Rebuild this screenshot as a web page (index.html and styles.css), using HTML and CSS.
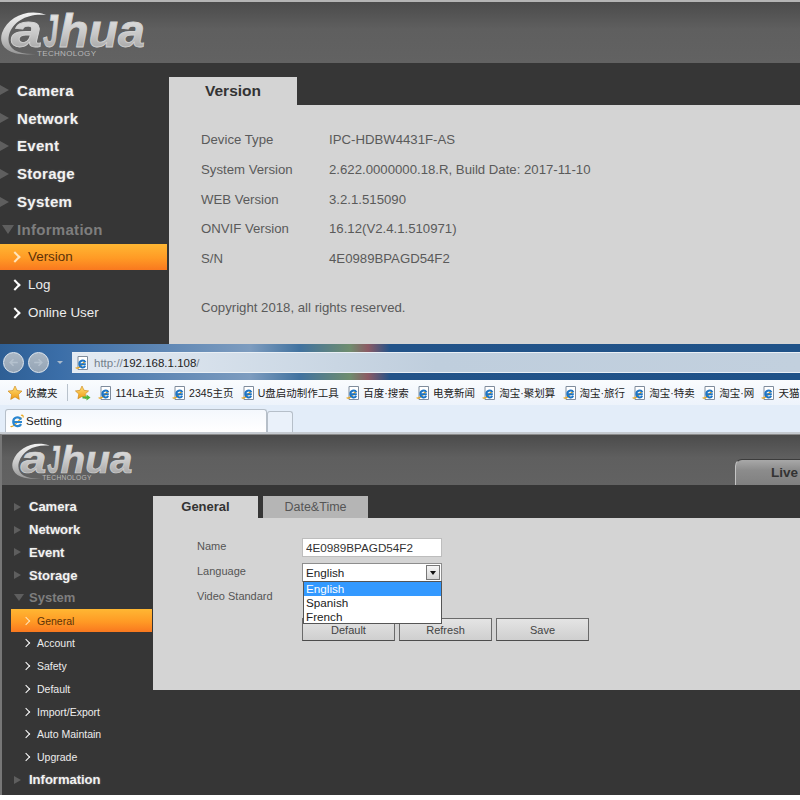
FILE: index.html
```html
<!DOCTYPE html>
<html lang="en">

<head>
    <meta charset="UTF-8">
    <meta name="viewport" content="width=device-width, initial-scale=1.0">
    <title>Setting</title>
    <link rel="stylesheet" href="styles.css">
</head>

<body>
    <!-- shared icons -->
    <svg class="defs" width="0" height="0">
        <defs>
            <linearGradient id="logoFill" x1="0" y1="0" x2="0" y2="1">
                <stop offset="0" stop-color="#f2f2f2" />
                <stop offset="0.55" stop-color="#c8c8c8" />
                <stop offset="1" stop-color="#969696" />
            </linearGradient>
            <linearGradient id="starFill" x1="0" y1="0" x2="0" y2="1">
                <stop offset="0" stop-color="#ffe27a" />
                <stop offset="1" stop-color="#f09a12" />
            </linearGradient>
            <symbol id="iePage" viewBox="0 0 14 14">
                <path d="M3 .5h9.500v13H3z" fill="#fff" stroke="#7f8c9c" />
                <path d="M.8 11.500C2 13.500 6 10.500 10 5" fill="none" stroke="#e8a61c" stroke-width="1.400" />
                <path d="M10.800 8.300H4.300a3.300 3.300 0 0 1 6.200-1.900M4.300 8.300a3.300 3.300 0 0 0 6 1.700" fill="none" stroke="#1c74c4" stroke-width="1.900" />
            </symbol>
        </defs>
    </svg>

    <section class="app app-large">
        <header class="app-header">
            <svg class="logo" viewBox="0 0 150 61" role="img" aria-label="dahua technology">
                <path class="logo-swoosh" d="M46 13C28 6 8 15 2 31-2 44 8 55 36 52 16 53 6 46 9 33 13 19 28 11 46 13Z" />
                <text class="logo-word" x="11" y="45" textLength="31" lengthAdjust="spacingAndGlyphs">a</text>
                <text class="logo-word" x="43" y="45" textLength="15" lengthAdjust="spacingAndGlyphs">J</text>
                <text class="logo-word" x="59" y="45" textLength="86" lengthAdjust="spacingAndGlyphs">hua</text>
                <text class="logo-sub" x="37" y="54" textLength="59">TECHNOLOGY</text>
            </svg>
        </header>
        <div class="app-body">
            <nav class="sidebar">
                <div class="menu-group">Camera</div>
                <div class="menu-group">Network</div>
                <div class="menu-group">Event</div>
                <div class="menu-group">Storage</div>
                <div class="menu-group">System</div>
                <div class="menu-group open">Information</div>
                <div class="menu-item active">Version</div>
                <div class="menu-item">Log</div>
                <div class="menu-item">Online User</div>
            </nav>
            <main class="content">
                <div class="tabs">
                    <div class="tab current">Version</div>
                </div>
                <div class="panel">
                    <dl class="info">
                        <dt>Device Type</dt>
                        <dd>IPC-HDBW4431F-AS</dd>
                        <dt>System Version</dt>
                        <dd>2.622.0000000.18.R, Build Date: 2017-11-10</dd>
                        <dt>WEB Version</dt>
                        <dd>3.2.1.515090</dd>
                        <dt>ONVIF Version</dt>
                        <dd>16.12(V2.4.1.510971)</dd>
                        <dt>S/N</dt>
                        <dd>4E0989BPAGD54F2</dd>
                    </dl>
                    <p class="copyright">Copyright 2018, all rights reserved.</p>
                </div>
            </main>
        </div>
    </section>

    <div class="browser">
        <div class="glass">
            <div class="nav-buttons">
                <span class="round-btn"><svg viewBox="0 0 12 12"><path d="M10 6H3M6 3 3 6l3 3" fill="none" stroke="#b4c1ce" stroke-width="1.500" /></svg></span>
                <span class="round-btn"><svg viewBox="0 0 12 12"><path d="M2 6h7M6 3l3 3-3 3" fill="none" stroke="#b4c1ce" stroke-width="1.500" /></svg></span>
                <span class="nav-drop"></span>
            </div>
            <div class="address">
                <svg class="ie-icon"><use href="#iePage" /></svg>
                <span class="url"><span class="url-dim">http://</span>192.168.1.108<span class="url-dim">/</span></span>
            </div>
        </div>
        <div class="favorites">
            <span class="fav-main">
                <svg class="star" viewBox="0 0 16 16"><path d="M8 1l2.100 4.500 4.900.6-3.600 3.400.9 4.900L8 11.900 3.700 14.400l.9-4.900L1 6.100l4.900-.6z" fill="url(#starFill)" stroke="#c9810f" stroke-width=".6" /></svg>
                收藏夹
            </span>
            <span class="fav-sep"></span>
            <svg class="star-add" viewBox="0 0 16 16">
                <path d="M7 1l2 4.300 4.600.6-3.400 3.200.9 4.600L7 11.400 2.900 13.700l.9-4.600L.4 5.900 5 5.300z" fill="url(#starFill)" stroke="#c9810f" stroke-width=".6" />
                <path d="M7.500 11.500h4V9.500l4 3-4 3v-2h-4z" fill="#4fb53a" />
            </svg>
            <a class="fav"><svg class="ie-icon"><use href="#iePage" /></svg>114La主页</a>
            <a class="fav"><svg class="ie-icon"><use href="#iePage" /></svg>2345主页</a>
            <a class="fav"><svg class="ie-icon"><use href="#iePage" /></svg>U盘启动制作工具</a>
            <a class="fav"><svg class="ie-icon"><use href="#iePage" /></svg>百度·搜索</a>
            <a class="fav"><svg class="ie-icon"><use href="#iePage" /></svg>电竞新闻</a>
            <a class="fav"><svg class="ie-icon"><use href="#iePage" /></svg>淘宝·聚划算</a>
            <a class="fav"><svg class="ie-icon"><use href="#iePage" /></svg>淘宝·旅行</a>
            <a class="fav"><svg class="ie-icon"><use href="#iePage" /></svg>淘宝·特卖</a>
            <a class="fav"><svg class="ie-icon"><use href="#iePage" /></svg>淘宝·网</a>
            <a class="fav"><svg class="ie-icon"><use href="#iePage" /></svg>天猫</a>
        </div>
        <div class="browser-tabs">
            <div class="browser-tab">
                <svg class="ie-big" viewBox="0 0 14 14">
                    <path d="M.8 12C1.500 14 6 10.500 11.500 3.500M11 1.500c1.500-.8 2.500 0 2 2" fill="none" stroke="#e8a61c" stroke-width="1.200" />
                    <path d="M12 8H3.300a4.300 4.300 0 0 1 8-2.500M3.300 8a4.300 4.300 0 0 0 7.900 2.200" fill="none" stroke="#2a86d0" stroke-width="2.200" />
                </svg>
                Setting
            </div>
            <div class="browser-tab-new"></div>
        </div>
    </div>

    <section class="app app-small">
        <header class="app-header">
            <svg class="logo" viewBox="0 0 150 61" role="img" aria-label="dahua technology">
                <path class="logo-swoosh" d="M46 13C28 6 8 15 2 31-2 44 8 55 36 52 16 53 6 46 9 33 13 19 28 11 46 13Z" />
                <text class="logo-word" x="11" y="45" textLength="31" lengthAdjust="spacingAndGlyphs">a</text>
                <text class="logo-word" x="43" y="45" textLength="15" lengthAdjust="spacingAndGlyphs">J</text>
                <text class="logo-word" x="59" y="45" textLength="86" lengthAdjust="spacingAndGlyphs">hua</text>
                <text class="logo-sub" x="37" y="54" textLength="59">TECHNOLOGY</text>
            </svg>
            <div class="live-tab">Live</div>
        </header>
        <div class="app-body">
            <nav class="sidebar">
                <div class="menu-group">Camera</div>
                <div class="menu-group">Network</div>
                <div class="menu-group">Event</div>
                <div class="menu-group">Storage</div>
                <div class="menu-group open">System</div>
                <div class="menu-item active">General</div>
                <div class="menu-item">Account</div>
                <div class="menu-item">Safety</div>
                <div class="menu-item">Default</div>
                <div class="menu-item">Import/Export</div>
                <div class="menu-item">Auto Maintain</div>
                <div class="menu-item">Upgrade</div>
                <div class="menu-group">Information</div>
            </nav>
            <main class="content">
                <div class="tabs">
                    <div class="tab current">General</div>
                    <div class="tab">Date&amp;Time</div>
                </div>
                <div class="panel">
                    <div class="form">
                        <label class="form-label">Name</label>
                        <input class="field" type="text" value="4E0989BPAGD54F2">
                        <label class="form-label">Language</label>
                        <div class="select-wrap">
                            <div class="select">
                                <span>English</span>
                                <span class="select-arrow"></span>
                            </div>
                            <ul class="dropdown">
                                <li class="selected">English</li>
                                <li>Spanish</li>
                                <li>French</li>
                            </ul>
                        </div>
                        <label class="form-label">Video Standard</label>
                        <div class="video-row"></div>
                    </div>
                    <div class="form-buttons">
                        <button class="btn">Default</button>
                        <button class="btn">Refresh</button>
                        <button class="btn">Save</button>
                    </div>
                </div>
            </main>
        </div>
    </section>
</body>

</html>
```

FILE: styles.css
```css
html,
body {
    margin: 0;
    padding: 0;
    height: 800px;
    overflow: hidden;
    background-color: #fff;
    font-family: "Liberation Sans", Arial, sans-serif;
}

.defs {
    display: block;
    height: 0;
}

/* device web page */
.app {
    display: flex;
    flex-direction: column;
    overflow: hidden;
    background-color: #363636;
}

.app-large {
    height: 344px;
    border-top: 2px solid #b4b4b4;
    box-sizing: border-box;
}

.app-small {
    height: 361px;
    border-top: 1px solid #8a8a8a;
    border-left: 2px solid #777;
    box-sizing: border-box;
}

.app-header {
    display: flex;
    justify-content: space-between;
    align-items: flex-start;
    flex-shrink: 0;
    background: linear-gradient(#4b4b4b, #5f5f5f 45%, #626262);
}

.app-large .app-header {
    height: 61px;
}

.app-small .app-header {
    height: 50px;
}

.logo {
    display: block;
    flex-shrink: 0;
}

.app-large .logo {
    width: 150px;
    height: 61px;
}

.app-small .logo {
    width: 126px;
    height: 51px;
    margin-left: 9px;
}

.logo-swoosh {
    fill: url(#logoFill);
}

.logo-word {
    font-size: 46px;
    font-weight: bold;
    font-style: italic;
    fill: url(#logoFill);
    stroke: #d2d2d2;
    stroke-width: 0.8px;
}

.logo-sub {
    font-size: 8px;
    fill: #b8b8b8;
}

.live-tab {
    flex-shrink: 0;
    align-self: flex-end;
    box-sizing: border-box;
    width: 65px;
    height: 26px;
    padding-left: 35px;
    line-height: 25px;
    font-size: 13.500px;
    font-weight: bold;
    color: #333;
    background: linear-gradient(#a8a8a8, #8c8c8c 40%, #808080);
    border-radius: 7px 0 0 0;
    border-top: 1px solid #3c3c3c;
    border-left: 1px solid #c4c4c4;
}

.app-body {
    display: flex;
    flex: 1;
    min-height: 0;
}

/* left menu */
.sidebar {
    flex-shrink: 0;
    display: flex;
    flex-direction: column;
}

.app-large .sidebar {
    width: 169px;
    padding-top: 13.500px;
}

.app-small .sidebar {
    width: 151px;
    padding-top: 10.600px;
}

.menu-group {
    display: flex;
    align-items: center;
    font-weight: bold;
    color: #f2f2f2;
    text-shadow: 0 0 2px rgba(255, 255, 255, 0.35);
}

.menu-group::before {
    content: "";
    flex-shrink: 0;
    width: 0;
    height: 0;
    border-style: solid;
    border-width: 5px 0 5px 9px;
    border-color: transparent transparent transparent #5e5e5e;
}

.menu-group.open {
    color: #7e7e7e;
    text-shadow: none;
}

.menu-group.open::before {
    border-width: 9px 6px 0 6px;
    border-color: #5e5e5e transparent transparent transparent;
}

.menu-item {
    display: flex;
    align-items: center;
    color: #ededed;
}

.menu-item::before {
    content: "";
    flex-shrink: 0;
    width: 6px;
    height: 6px;
    border-top: 2px solid #fff;
    border-right: 2px solid #fff;
    transform: rotate(45deg);
}

.menu-item.active {
    color: #5c3208;
    background: linear-gradient(#ffb733, #ff9a25 55%, #f9781f);
}

.menu-item.active::before {
    border-color: #ffe4bb;
}

.app-large .menu-group {
    height: 27.800px;
    font-size: 15px;
    letter-spacing: 0.3px;
}

.app-large .menu-group::before {
    margin-right: 8px;
}

.app-large .menu-group.open::before {
    margin: 0 3px 0 2px;
}

.app-large .menu-item {
    height: 27.800px;
    width: 167px;
    font-size: 13.400px;
}

.app-large .menu-item.active {
    height: 26px;
    margin: 0.300px 0 1.500px;
}

.app-large .menu-item::before {
    margin: 0 9px 0 11px;
}

.app-small .menu-group {
    height: 22.750px;
    font-size: 13px;
    padding-left: 12px;
}

.app-small .menu-group::before {
    border-width: 4px 0 4px 7px;
    margin-right: 8px;
}

.app-small .menu-group.open::before {
    border-width: 7px 5px 0 5px;
    margin-right: 5px;
}

.app-small .menu-item {
    height: 22.750px;
    font-size: 10.500px;
    margin-left: 9px;
    width: 141px;
}

.app-small .menu-item::before {
    width: 5px;
    height: 5px;
    margin: 0 8px 0 12px;
    border-width: 1.500px;
}

/* right side */
.content {
    flex: 1;
    display: flex;
    flex-direction: column;
}

.app-large .content {
    padding-top: 14px;
}

.app-small .content {
    padding-top: 11px;
    padding-bottom: 105px;
}

.tabs {
    display: flex;
    gap: 5px;
}

.tab {
    text-align: center;
    background-color: #b5b5b5;
    color: #555;
}

.tab.current {
    background-color: #d4d4d4;
    color: #333;
    font-weight: bold;
}

.app-large .tab {
    width: 128px;
    height: 28px;
    line-height: 27px;
    font-size: 15.500px;
}

.app-small .tab {
    width: 105px;
    height: 22px;
    line-height: 22px;
    font-size: 12.500px;
}

.app-small .tab.current {
    font-size: 13px;
}

.panel {
    flex: 1;
    background-color: #d4d4d4;
}

.app-large .panel {
    padding: 20px 32px 0;
}

.info {
    display: grid;
    grid-template-columns: 128px 1fr;
    grid-auto-rows: 29.700px;
    align-items: center;
    margin: 0;
    font-size: 13.200px;
    color: #5a5a5a;
}

.info dd {
    margin: 0;
}

.copyright {
    margin: 27px 0 0;
    font-size: 13.200px;
    color: #5a5a5a;
}

.form {
    display: grid;
    grid-template-columns: 105px 140px;
    grid-template-rows: 19px 19px 19px;
    row-gap: 6px;
    align-items: center;
    padding: 20px 0 0 44px;
}

.form-label {
    padding-bottom: 3px;
    font-size: 11px;
    color: #555;
}

.field {
    box-sizing: border-box;
    width: 140px;
    height: 19px;
    padding: 0 3px;
    margin: 0;
    border: 1px solid #bdbdbd;
    background-color: #fff;
    font-family: inherit;
    font-size: 11.700px;
    color: #333;
}

.select-wrap {
    position: relative;
}

.select {
    box-sizing: border-box;
    display: flex;
    justify-content: space-between;
    align-items: center;
    height: 19px;
    padding: 0 1px 0 3px;
    border: 1px solid #8d8d8d;
    background-color: #fff;
    font-size: 11.700px;
    color: #222;
}

.select-arrow {
    box-sizing: border-box;
    width: 14px;
    height: 15px;
    border: 1px solid #777;
    background: linear-gradient(#f6f6f6, #d6d6d6);
    position: relative;
}

.select-arrow::after {
    content: "";
    position: absolute;
    left: 3px;
    top: 5px;
    border-style: solid;
    border-width: 4px 3px 0 3px;
    border-color: #111 transparent transparent transparent;
}

.dropdown {
    position: absolute;
    z-index: 2;
    top: 18px;
    left: 1px;
    box-sizing: border-box;
    width: 139px;
    height: 43px;
    margin: 0;
    padding: 0;
    list-style: none;
    border: 1px solid #555;
    background-color: #fff;
    font-size: 11.700px;
    line-height: 14px;
    color: #222;
}

.dropdown li {
    padding-left: 2px;
    height: 14px;
}

.dropdown .selected {
    background-color: #3399ff;
    color: #fff;
}

.form-buttons {
    display: flex;
    gap: 4px;
    margin: 11px 0 0 149px;
}

.btn {
    box-sizing: border-box;
    width: 93px;
    height: 23px;
    padding: 0;
    border: 1px solid #6a6a6a;
    border-bottom-color: #4c4c4c;
    background: linear-gradient(#e4e4e4, #cfcfcf);
    font-family: inherit;
    font-size: 11px;
    color: #444;
}

/* IE window between the two pages */
.browser {
    height: 90px;
    display: flex;
    flex-direction: column;
    overflow: hidden;
}

.glass {
    height: 36px;
    display: flex;
    align-items: center;
    gap: 8px;
    padding-left: 3px;
    background:
        linear-gradient(90deg, #2e5f95 0, #3b6ea8 60px, #7d9cbf 250px, #41729f 300px, #6f8d6e 350px, #8c5a64 368px, #225389 390px, #1f5288 100%);
}

.nav-buttons {
    display: flex;
    align-items: center;
    gap: 4px;
}

.round-btn {
    box-sizing: border-box;
    display: flex;
    align-items: center;
    justify-content: center;
    width: 21px;
    height: 21px;
    border: 1px solid #e4eaf0;
    border-radius: 50%;
    background: linear-gradient(#a9b6c4, #95a5b6);
}

.round-btn svg {
    width: 13px;
    height: 13px;
}

.nav-drop {
    margin-left: 4px;
    border-style: solid;
    border-width: 3px 3px 0 3px;
    border-color: #a9bacb transparent transparent transparent;
}

.address {
    flex: 1;
    display: flex;
    align-items: center;
    gap: 5px;
    height: 21px;
    margin-top: 1px;
    margin-left: 1px;
    padding-left: 3px;
    background: linear-gradient(90deg, #e4ebf3, #bfcedd 50%, #c2d0de);
    border-top: 1px solid #e9eff5;
    border-bottom: 1px solid #e9eff5;
    box-sizing: border-box;
    font-size: 11.500px;
}

.url {
    color: #222;
}

.url-dim {
    color: #75808c;
}

.ie-icon {
    flex-shrink: 0;
    width: 14px;
    height: 14px;
}

.favorites {
    height: 25px;
    display: flex;
    align-items: center;
    gap: 7.300px;
    padding-left: 7px;
    background: linear-gradient(#fafcfe, #edf3fb);
    white-space: nowrap;
    font-family: "Liberation Sans", "Noto Sans CJK SC", sans-serif;
    font-size: 10.500px;
    color: #222;
}

.fav-main {
    display: flex;
    align-items: center;
    gap: 3px;
}

.star {
    width: 16px;
    height: 16px;
}

.star-add {
    flex-shrink: 0;
    width: 16px;
    height: 16px;
}

.fav-sep {
    width: 1px;
    height: 17px;
    background-color: #b9c2cc;
    margin: 0 0 0 2px;
}

.fav {
    display: flex;
    align-items: center;
    gap: 3px;
    flex-shrink: 0;
}

.browser-tabs {
    flex: 1;
    display: flex;
    align-items: flex-end;
    padding-left: 5px;
    background-color: #e3edf9;
    border-bottom: 2px solid #c5cad0;
    box-sizing: border-box;
}

.browser-tab {
    box-sizing: border-box;
    width: 262px;
    height: 23px;
    display: flex;
    align-items: center;
    gap: 2px;
    padding-left: 4px;
    background: linear-gradient(#f4f8fd, #fff);
    border: 1px solid #b6bfc9;
    border-bottom: 0;
    border-radius: 3px 3px 0 0;
    font-size: 11.500px;
    color: #222;
}

.ie-big {
    width: 14px;
    height: 14px;
}

.browser-tab-new {
    box-sizing: border-box;
    width: 26px;
    height: 21px;
    border: 1px solid #b6bfc9;
    border-bottom: 0;
    border-radius: 3px 3px 0 0;
    background-color: #eaf1fa;
}
```
